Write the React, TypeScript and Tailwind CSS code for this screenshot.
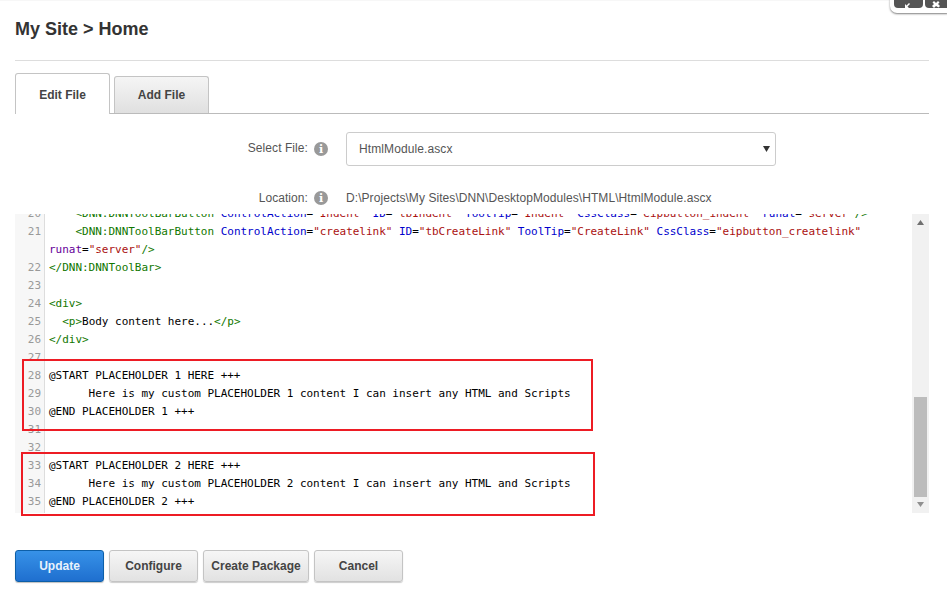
import React from "react";

const tag = "text-[#117700]";
const attr = "text-[#0000cc]";
const str = "text-[#aa1111]";
const blk = "text-black";

type Seg = [string, string];

function Line({ n, segs }: { n?: number; segs: Seg[] }) {
  return (
    <div className="flex h-[18px] leading-[18px]">
      <div className="w-[30px] shrink-0 border-r border-[#dddddd] bg-[#f7f7f7] pr-[3px] text-right text-[#999999]">{n}</div>
      <div className="whitespace-pre pl-[4px]">
        {segs.map((s, i) => (
          <span key={i} className={s[1]}>{s[0]}</span>
        ))}
      </div>
    </div>
  );
}

function InfoIcon() {
  return <span className="flex h-[14px] w-[14px] items-center justify-center rounded-full bg-[#999999] text-[11px] font-bold leading-none text-white [font-family:'DejaVu_Serif',serif]">i</span>;
}

function Btn({ label, w, primary }: { label: string; w: string; primary?: boolean }) {
  return (
    <button
      className={
        primary
          ? `h-[32px] ${w} rounded-[3px] border border-[#0d5fa8] bg-gradient-to-b from-[#3792e8] to-[#1f6fcf] text-[12px] font-bold text-[#e8f2fc] shadow-[0_1px_1px_rgba(0,0,0,0.25)]`
          : `h-[32px] ${w} rounded-[3px] border border-[#c4c4c4] bg-gradient-to-b from-[#f6f6f6] to-[#e2e2e2] text-[12px] font-bold text-[#444444] shadow-[0_1px_1px_rgba(0,0,0,0.2)]`
      }
    >
      {label}
    </button>
  );
}

export default function App() {
  return (
    <div className="relative h-[591px] w-[947px] overflow-hidden bg-white pl-[15px] pr-[18px] font-['Liberation_Sans',Arial,sans-serif] text-[#444444]">
      <div className="absolute left-0 right-0 top-0 h-[1px] bg-[#f7f7f7]" />
      <div className="absolute right-[-6px] top-[-6px] flex h-[19px] gap-[2px] rounded-[7px] bg-white pl-[4px] pr-[3px] shadow-[0_1px_2px_rgba(0,0,0,0.5)]">
        <div className="flex h-[14px] w-[29px] items-end justify-center rounded-b-[4px] bg-[#555555] pb-[0px]">
          <svg width="10" height="7" viewBox="0 0 10 7"><path d="M1 7V3l1.500 1.500L5 2l1 1-2.500 2.500L5 7z" fill="#ffffff" /></svg>
        </div>
        <div className="flex h-[14px] w-[25px] items-end justify-center rounded-b-[4px] bg-[#555555] pr-[3px]">
          <svg width="10" height="7" viewBox="0 0 10 7"><path d="M1 5l2-2-1.500-1.500L3 0l2 2 2-2 1.500 1.500L7 3l2 2-1.500 1.500L5 5 3 7z" fill="#ffffff" /></svg>
        </div>
      </div>

      <h1 className="h-[60px] pt-[17px] text-[18px] font-bold leading-[24px] text-[#333333]">My Site &gt; Home</h1>
      <div className="h-[1px] bg-[#dddddd]" />

      <div className="mt-[12px] flex h-[41px] items-end gap-[4px] border-b border-[#bbbbbb]">
        <div className="-mb-[1px] flex h-[41px] w-[95px] items-center justify-center rounded-t-[3px] border border-b-0 border-[#c4c4c4] bg-white pt-[2px] text-[12px] font-bold text-[#444444]">Edit File</div>
        <div className="flex h-[37px] w-[95px] items-center justify-center rounded-t-[3px] border border-b-0 border-[#c4c4c4] bg-gradient-to-b from-[#f5f5f5] to-[#e0e0e0] text-[12px] font-bold text-[#444444]">Add File</div>
      </div>

      <div className="mt-[18px] flex h-[34px] items-center text-[12px]">
        <div className="flex w-[313px] items-center justify-end gap-[6px]">
          <span className="pb-[3px] tracking-[0.07px] text-[#555555]">Select File:</span>
          <InfoIcon />
        </div>
        <div className="ml-[18px] flex h-[34px] w-[430px] items-center justify-between rounded-[3px] border border-[#cccccc] pl-[12px] pr-[5px] tracking-[0.1px] text-[#555555]">
          <span>HtmlModule.ascx</span>
          <svg width="7" height="6" viewBox="0 0 7 6"><path d="M0 0h7L3.500 6z" fill="#333333" /></svg>
        </div>
      </div>

      <div className="mt-[23px] flex h-[18px] items-center text-[12px]">
        <div className="flex w-[313px] items-center justify-end gap-[6px]">
          <span className="tracking-[0.07px] text-[#555555]">Location:</span>
          <InfoIcon />
        </div>
        <span className="ml-[18px] tracking-[0.07px] text-[#555555]">D:\Projects\My Sites\DNN\DesktopModules\HTML\HtmlModule.ascx</span>
      </div>

      <div className="mt-[7px] flex h-[299px] w-[914px] overflow-hidden">
        <div className="h-[299px] w-[897px] overflow-hidden font-['DejaVu_Sans_Mono',monospace] text-[11px] tracking-[-0.02px]">
          <div className="-mt-[9px]">
            <Line n={20} segs={[["    ", blk], ["<DNN:DNNToolBarButton", tag], [" ", blk], ["ControlAction", attr], ["=", blk], ['"Indent"', str], [" ", blk], ["ID", attr], ["=", blk], ['"tbIndent"', str], [" ", blk], ["ToolTip", attr], ["=", blk], ['"Indent"', str], [" ", blk], ["CssClass", attr], ["=", blk], ['"eipbutton_indent"', str], [" ", blk], ["runat", attr], ["=", blk], ['"server"', str], ["/>", tag]]} />
            <Line n={21} segs={[["    ", blk], ["<DNN:DNNToolBarButton", tag], [" ", blk], ["ControlAction", attr], ["=", blk], ['"createlink"', str], [" ", blk], ["ID", attr], ["=", blk], ['"tbCreateLink"', str], [" ", blk], ["ToolTip", attr], ["=", blk], ['"CreateLink"', str], [" ", blk], ["CssClass", attr], ["=", blk], ['"eipbutton_createlink"', str]]} />
            <Line segs={[["runat", "text-[#660099]"], ["=", blk], ['"server"', str], ["/>", tag]]} />
            <Line n={22} segs={[["</DNN:DNNToolBar>", tag]]} />
            <Line n={23} segs={[["", blk]]} />
            <Line n={24} segs={[["<div>", tag]]} />
            <Line n={25} segs={[["  ", blk], ["<p>", tag], ["Body content here...", blk], ["</p>", tag]]} />
            <Line n={26} segs={[["</div>", tag]]} />
            <Line n={27} segs={[["", blk]]} />
            <Line n={28} segs={[["@START PLACEHOLDER 1 HERE +++", blk]]} />
            <Line n={29} segs={[["      Here is my custom PLACEHOLDER 1 content I can insert any HTML and Scripts", blk]]} />
            <Line n={30} segs={[["@END PLACEHOLDER 1 +++", blk]]} />
            <Line n={31} segs={[["", blk]]} />
            <Line n={32} segs={[["", blk]]} />
            <Line n={33} segs={[["@START PLACEHOLDER 2 HERE +++", blk]]} />
            <Line n={34} segs={[["      Here is my custom PLACEHOLDER 2 content I can insert any HTML and Scripts", blk]]} />
            <Line n={35} segs={[["@END PLACEHOLDER 2 +++", blk]]} />
            <Line segs={[["", blk]]} />
          </div>
        </div>
        <div className="flex h-[299px] w-[17px] flex-col items-center justify-between bg-[#f1f1f1]">
          <div className="flex h-[17px] items-center">
            <svg width="7" height="5" viewBox="0 0 7 5"><path d="M3.500 0L7 5H0z" fill="#707070" /></svg>
          </div>
          <div className="flex h-[17px] items-center">
            <svg width="7" height="5" viewBox="0 0 7 5"><path d="M0 0h7L3.500 5z" fill="#909090" /></svg>
          </div>
        </div>
      </div>
      <div className="absolute left-[914px] top-[397px] h-[100px] w-[13px] bg-[#bcbcbc]" />

      <div className="absolute left-[22px] top-[359px] h-[72px] w-[571px] border-2 border-[#ed1c24]" />
      <div className="absolute left-[21px] top-[452px] h-[64px] w-[574px] border-2 border-[#ed1c24]" />

      <div className="mt-[37px] flex gap-[5px]">
        <Btn label="Update" w="w-[89px]" primary />
        <Btn label="Configure" w="w-[89px]" />
        <Btn label="Create Package" w="w-[106px]" />
        <Btn label="Cancel" w="w-[89px]" />
      </div>
    </div>
  );
}
